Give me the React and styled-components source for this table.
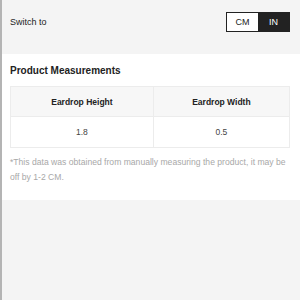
import React, { useState } from "react";
import styled, { createGlobalStyle } from "styled-components";

const GlobalStyle = createGlobalStyle`
  html, body {
    margin: 0;
    padding: 0;
    background: #f4f4f4;
    font-family: "Liberation Sans", Arial, sans-serif;
  }
`;

const Page = styled.div`
  width: 300px;
  height: 300px;
  box-sizing: border-box;
  border-left: 2px solid #b4b4b4;
  background: #f4f4f4;
`;

const SwitchBar = styled.div`
  height: 54px;
  box-sizing: border-box;
  padding: 12px 10px 0 8px;
  display: flex;
  align-items: flex-start;
  justify-content: space-between;
  font-size: 9px;
  color: #222;
`;

const Label = styled.span`
  line-height: 20px;
`;

const Toggle = styled.div`
  display: flex;
  border: 1px solid #222;
`;

const ToggleOption = styled.button`
  width: 31px;
  height: 18px;
  border: none;
  padding: 0;
  font-family: inherit;
  font-size: 9px;
  background: ${(p) => (p.$active ? "#222" : "#fff")};
  color: ${(p) => (p.$active ? "#fff" : "#222")};
  cursor: pointer;
`;

const Section = styled.div`
  background: #fff;
  padding: 10px 10px 0 8px;
  height: 146px;
  box-sizing: border-box;
`;

const Title = styled.h2`
  margin: 0 0 8px;
  font-size: 10px;
  font-weight: bold;
  color: #222;
  line-height: 14px;
`;

const Table = styled.table`
  width: 100%;
  border-collapse: collapse;
  font-size: 8.5px;
  color: #222;
  text-align: center;
`;

const Th = styled.th`
  border: 1px solid #ececec;
  background: #f7f7f7;
  height: 29px;
  padding: 0;
  font-weight: bold;
`;

const Td = styled.td`
  border: 1px solid #ececec;
  height: 30px;
  padding: 0;
  color: #444;
`;

const Note = styled.p`
  margin: 7px 0 0;
  font-size: 8.6px;
  line-height: 14.5px;
  color: #a8a8a8;
`;

const columns = ["Eardrop Height", "Eardrop Width"];
const values = { CM: ["1.8", "0.5"], IN: ["1.8", "0.5"] };

export default function App() {
  const [unit, setUnit] = useState("IN");
  return (
    <Page>
      <GlobalStyle />
      <SwitchBar>
        <Label>Switch to</Label>
        <Toggle>
          {["CM", "IN"].map((u) => (
            <ToggleOption key={u} $active={unit === u} onClick={() => setUnit(u)}>
              {u}
            </ToggleOption>
          ))}
        </Toggle>
      </SwitchBar>
      <Section>
        <Title>Product Measurements</Title>
        <Table>
          <thead>
            <tr>
              {columns.map((c) => (
                <Th key={c}>{c}</Th>
              ))}
            </tr>
          </thead>
          <tbody>
            <tr>
              {values[unit].map((v, i) => (
                <Td key={i}>{v}</Td>
              ))}
            </tr>
          </tbody>
        </Table>
        <Note>
          *This data was obtained from manually measuring the product, it may be off by 1-2 CM.
        </Note>
      </Section>
    </Page>
  );
}
